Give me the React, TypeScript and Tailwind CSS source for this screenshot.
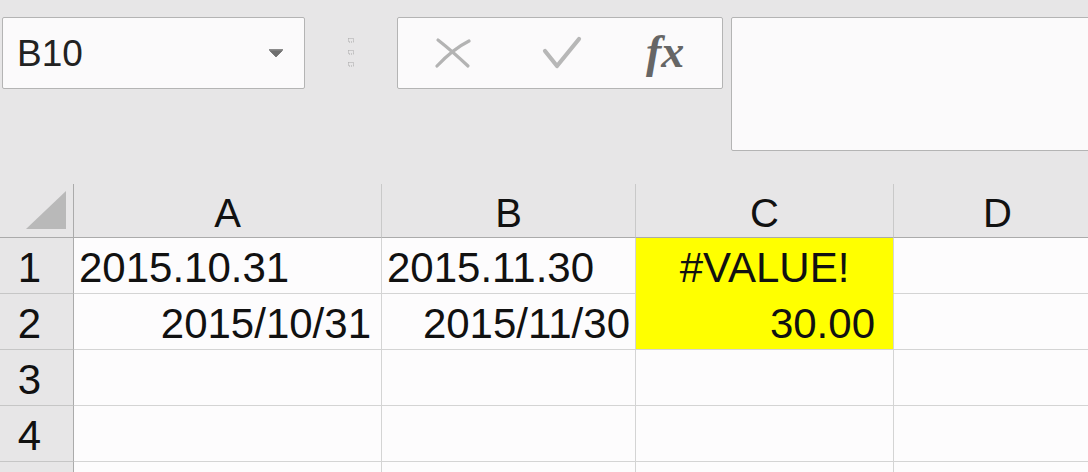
import React from "react";

const FONT = { fontFamily: '"Liberation Sans", Arial, sans-serif' };

type Cell = { text?: string; align?: "left" | "right" | "center"; fill?: boolean; pad?: string };

const columns = ["A", "B", "C", "D"];

const rows: Cell[][] = [
  [
    { text: "2015.10.31", align: "left", pad: "pl-[5px]" },
    { text: "2015.11.30", align: "left", pad: "pl-[5px]" },
    { text: "#VALUE!", align: "center", fill: true },
    {},
  ],
  [
    { text: "2015/10/31", align: "right", pad: "pr-[10px]" },
    { text: "2015/11/30", align: "right", pad: "pr-[5px]" },
    { text: "30.00", align: "right", fill: true, pad: "pr-[18px]" },
    {},
  ],
  [{}, {}, {}, {}],
  [{}, {}, {}, {}],
];

const colWidths = ["w-[308px]", "w-[254px]", "w-[258px]", "w-[208px]"];

const NameBox = () => (
  <div className="w-[303px] shrink-0 h-[72px] bg-[#fbfafb] border border-[#b4b4b4] rounded-[2px] flex items-center justify-between pl-[14px] pr-[21px]">
    <span className="text-[37px] leading-none text-[#222]" style={FONT}>
      B10
    </span>
    <svg width="14" height="8" viewBox="0 0 14 8">
      <path d="M0 0.5 H14 M0.5 1.5 L7 8 L13.5 1.5 Z" fill="#6f6f6f" stroke="#6f6f6f" strokeWidth="0.8" />
    </svg>
  </div>
);

const Grip = () => (
  <svg width="8" height="30" viewBox="0 0 8 30" className="mt-[20px]">
    {[0, 12, 24].map((y) => (
      <rect key={y} x="1.5" y={y + 1.5} width="5" height="3.5" fill="none" stroke="#a9a9a9" strokeWidth="1" strokeDasharray="1 1" />
    ))}
  </svg>
);

const FormulaButtons = () => (
  <div className="w-[326px] shrink-0 h-[72px] bg-[#fbfafb] border border-[#b4b4b4] rounded-[2px] flex items-center pl-[37px]">
    <svg width="36" height="32" viewBox="0 0 36 32" className="shrink-0">
      <path d="M3 3 Q17 14 33 29" fill="none" stroke="#b3b3b3" strokeWidth="3.2" strokeLinecap="round" />
      <path d="M34 4 Q18 12 2 29" fill="none" stroke="#b3b3b3" strokeWidth="3.2" strokeLinecap="round" />
    </svg>
    <svg width="40" height="34" viewBox="0 0 40 34" className="ml-[71px] shrink-0">
      <path d="M3 15 L15 30 L37 3" fill="none" stroke="#b7b7b7" strokeWidth="4.2" strokeLinecap="round" strokeLinejoin="round" />
    </svg>
    <span
      className="ml-[64px] text-[46px] leading-none italic font-bold text-[#666] -mt-[2px]"
      style={{ fontFamily: '"Liberation Serif", "Times New Roman", serif' }}
    >
      fx
    </span>
  </div>
);

export default function App() {
  return (
    <div className="w-[1088px] h-[472px] overflow-hidden bg-[#e7e6e7]" style={FONT}>
      {/* toolbar */}
      <div className="h-[184px] flex items-start pt-[17px] pl-[2px]">
        <NameBox />
        <div className="w-[92px] shrink-0 flex justify-center">
          <Grip />
        </div>
        <FormulaButtons />
        <div className="ml-[8px] w-[420px] shrink-0 h-[134px] bg-[#fbfafb] border border-[#b4b4b4] rounded-[2px]" />
      </div>

      {/* sheet */}
      <div className="flex flex-col">
        <div className="flex h-[54px] shrink-0">
          <div className="w-[74px] shrink-0 flex items-end justify-end pr-[7px] pb-[8px] border-r border-b border-[#ababab]">
            <svg width="40" height="38" viewBox="0 0 40 38">
              <path d="M40 0 V38 H0 Z" fill="#b9b9b9" />
            </svg>
          </div>
          {columns.map((c, i) => (
            <div
              key={c}
              className={`${colWidths[i]} shrink-0 flex items-center justify-center pt-[4px] border-b border-b-[#ababab] border-r border-r-[#c9c9c9] text-[40px] leading-none text-[#111]`}
            >
              {c}
            </div>
          ))}
        </div>

        {rows.map((row, r) => (
          <div key={r} className="flex h-[56px] shrink-0">
            <div className="w-[74px] shrink-0 flex items-center justify-center pr-[14px] pt-[5px] bg-[#e7e6e7] border-r border-r-[#ababab] border-b border-b-[#c6c6c6] text-[42px] leading-none text-[#111]">
              {r + 1}
            </div>
            {row.map((cell, i) => (
              <div
                key={i}
                className={`${colWidths[i]} shrink-0 flex items-center pt-[5px] border-r border-b text-[42px] leading-none text-[#111] whitespace-nowrap ${
                  cell.fill
                    ? r === 0
                      ? "bg-[#ffff00] border-b-[#ffff00] border-r-[#d4d4d4]"
                      : "bg-[#ffff00] border-[#d4d4d4]"
                    : "bg-[#fdfcfd] border-[#d4d4d4]"
                } ${
                  cell.align === "right" ? "justify-end" : cell.align === "center" ? "justify-center" : "justify-start"
                } ${cell.pad ?? ""}`}
              >
                {cell.text}
              </div>
            ))}
          </div>
        ))}

        {/* top of row 5, cut by the window edge */}
        <div className="flex h-[11px] shrink-0">
          <div className="w-[74px] shrink-0 bg-[#e7e6e7] border-r border-r-[#ababab]" />
          {colWidths.map((w, i) => (
            <div key={i} className={`${w} shrink-0 bg-[#fdfcfd] border-r border-[#d4d4d4]`} />
          ))}
        </div>
      </div>
    </div>
  );
}
